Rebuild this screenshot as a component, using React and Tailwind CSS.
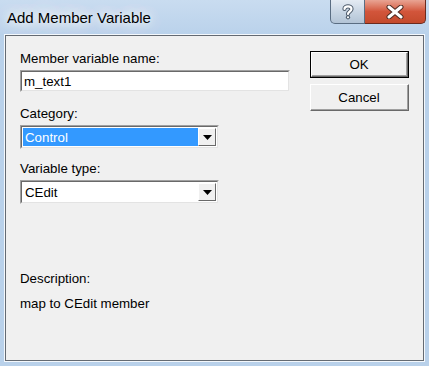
import React from "react";

const font = { fontFamily: '"Liberation Sans", Arial, sans-serif' };

function Arrow() {
  return (
    <svg width="9" height="5" viewBox="0 0 9 5">
      <path d="M0 0 H9 L4.5 5 Z" fill="#000" />
    </svg>
  );
}

function Combo({ value, selected }) {
  return (
    <div className="w-[199px] h-[24px] border-t border-l border-[#a0a0a0] border-r border-b border-r-[#f0f0f0] border-b-[#f0f0f0] bg-white">
      <div className="h-full border-t border-l border-[#696969] border-r border-b border-r-[#e3e3e3] border-b-[#e3e3e3] flex items-stretch p-[1px]">
        <div className={"flex-1 flex items-center pl-[2px] text-[13.3px] leading-[15px] " + (selected ? "bg-[#3399ff] text-white" : "text-black")}>
          {value}
        </div>
        <div className="w-[18px] bg-[#f0f0f0] border-t border-l border-white border-r border-b border-r-[#696969] border-b-[#696969] flex items-center justify-center">
          <Arrow />
        </div>
      </div>
    </div>
  );
}

function Button({ children, def }) {
  return (
    <div className={"w-[99px] h-[27px] bg-[#f0f0f0] " + (def ? "border border-[#000]" : "")}>
      <div className="h-full border-t border-l border-white border-r border-b border-r-[#696969] border-b-[#696969]">
        <div className="h-full border-r border-b border-r-[#a0a0a0] border-b-[#a0a0a0] flex items-center justify-center text-[13.3px] leading-[15px] text-black">
          {children}
        </div>
      </div>
    </div>
  );
}

export default function App() {
  return (
    <div
      style={font}
      className="w-[429px] h-[366px] flex flex-col bg-[#b9d1ea] overflow-hidden"
    >
      <div className="h-[34px] flex items-start bg-gradient-to-b from-[#c9dcf0] to-[#bad2eb]">
        <div className="flex-1 pl-[7px] pt-[9px] text-[15px] leading-[18px] text-black [text-shadow:0_0_8px_#ffffff,0_0_16px_#ffffff,0_0_24px_#ffffff,0_0_24px_#ffffff]">
          Add Member Variable
        </div>
        <div className="flex mr-[3px]">
          <div className="w-[35px] h-[24px] rounded-bl-[5px] border border-t-0 border-[#5a6d82] bg-gradient-to-b from-[#e4ebf3] via-[#c9d6e4] to-[#b3c4d6] flex items-center justify-center">
            <svg width="14" height="16" viewBox="0 0 14 16">
              <path d="M3.5 5 C3.5 1.5 10.5 1.5 10.5 5 C10.5 7.5 7 7.5 7 10" fill="none" stroke="#4a5868" strokeWidth="4.2" strokeLinecap="round" />
              <circle cx="7" cy="13.3" r="2.1" fill="#4a5868" />
              <path d="M3.5 5 C3.5 1.5 10.5 1.5 10.5 5 C10.5 7.5 7 7.5 7 10" fill="none" stroke="#fff" strokeWidth="2.2" strokeLinecap="round" />
              <circle cx="7" cy="13.3" r="1.1" fill="#fff" />
            </svg>
          </div>
          <div className="w-[61px] h-[24px] rounded-br-[5px] border border-t-0 border-l-0 border-[#6b2a1e] bg-gradient-to-b from-[#e8a493] via-[#d2553b] to-[#c44a2c] flex items-center justify-center">
            <svg width="18" height="14" viewBox="0 0 18 14">
              <path d="M3 2 L15 12 M15 2 L3 12" stroke="#4a2a22" strokeWidth="5" strokeLinecap="round" />
              <path d="M3 2 L15 12 M15 2 L3 12" stroke="#fff" strokeWidth="3" strokeLinecap="round" />
            </svg>
          </div>
        </div>
      </div>
      <div className="mx-[4px] h-[328px] border border-[#f4f8fc]">
        <div className="h-full border border-[#646a72] bg-[#f0f0f0] flex">
          <div className="flex flex-col pl-[14px] pt-[15px] w-[302px]">
            <div className="text-[13.3px] leading-[15px] text-black">Member variable name:</div>
            <div className="mt-[4px] w-[270px] h-[22px] border-t border-l border-[#a0a0a0] border-r border-b border-r-[#f0f0f0] border-b-[#f0f0f0] bg-white">
              <div className="h-full border-t border-l border-[#696969] border-r border-b border-r-[#e3e3e3] border-b-[#e3e3e3] flex items-center pl-[2px] text-[13.3px] leading-[15px] text-black">
                m_text1
              </div>
            </div>
            <div className="mt-[14px] text-[13.3px] leading-[15px] text-black">Category:</div>
            <div className="mt-[4px]">
              <Combo value="Control" selected />
            </div>
            <div className="mt-[12px] text-[13.3px] leading-[15px] text-black">Variable type:</div>
            <div className="mt-[4px]">
              <Combo value="CEdit" />
            </div>
            <div className="mt-[67px] text-[13.3px] leading-[15px] text-black">Description:</div>
            <div className="mt-[10px] text-[13.3px] leading-[15px] text-black">map to CEdit member</div>
          </div>
          <div className="flex flex-col pt-[15px] pl-[2px] gap-[6px]">
            <Button def>OK</Button>
            <Button>Cancel</Button>
          </div>
        </div>
      </div>
    </div>
  );
}
